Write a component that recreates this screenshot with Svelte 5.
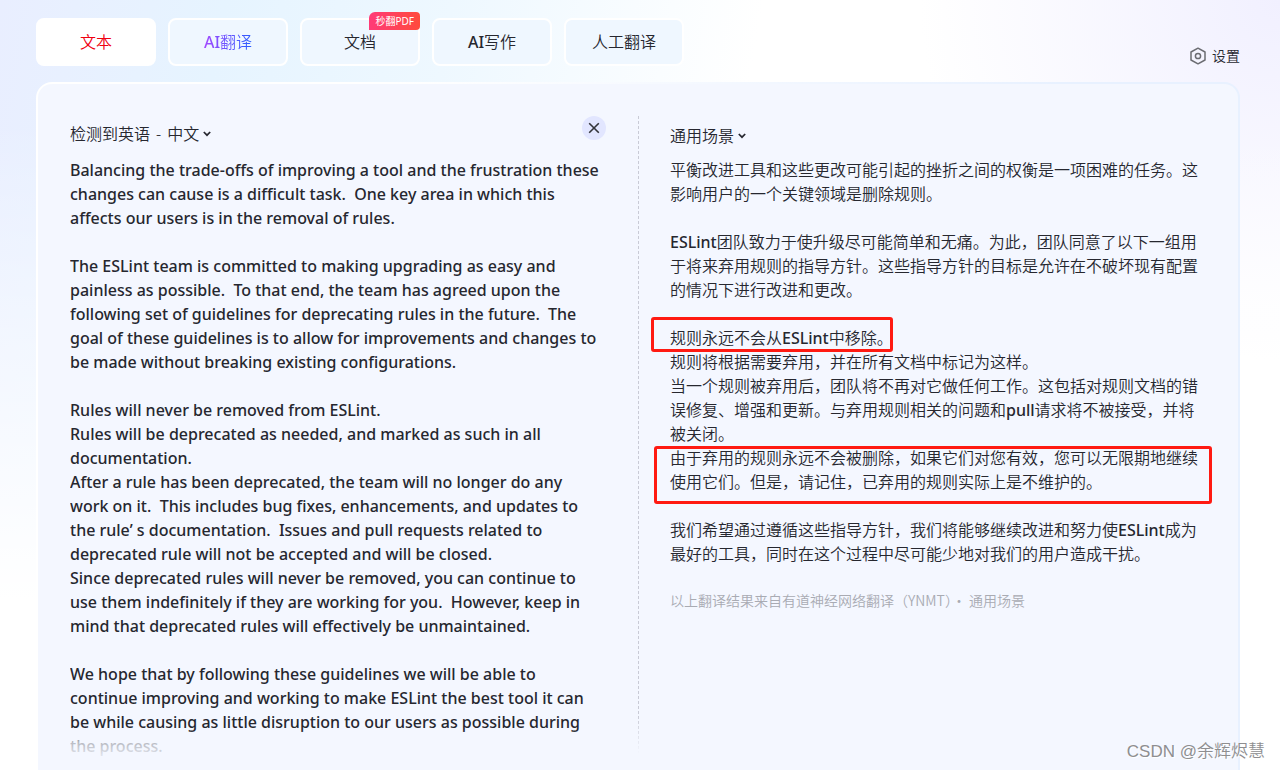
<script lang="ts">
  const tabs = [
    { label: '文本', kind: 'active' },
    { label: 'AI翻译', kind: 'ai' },
    { label: '文档', kind: '', badge: '秒翻PDF' },
    { label: 'AI写作', kind: '' },
    { label: '人工翻译', kind: '' }
  ];

  let source = $state(`Balancing the trade-offs of improving a tool and the frustration these
changes can cause is a difficult task.  One key area in which this
affects our users is in the removal of rules.

The ESLint team is committed to making upgrading as easy and
painless as possible.  To that end, the team has agreed upon the
following set of guidelines for deprecating rules in the future.  The
goal of these guidelines is to allow for improvements and changes to
be made without breaking existing configurations.

Rules will never be removed from ESLint.
Rules will be deprecated as needed, and marked as such in all
documentation.
After a rule has been deprecated, the team will no longer do any
work on it.  This includes bug fixes, enhancements, and updates to
the rule’ s documentation.  Issues and pull requests related to
deprecated rule will not be accepted and will be closed.
Since deprecated rules will never be removed, you can continue to
use them indefinitely if they are working for you.  However, keep in
mind that deprecated rules will effectively be unmaintained.

We hope that by following these guidelines we will be able to
continue improving and working to make ESLint the best tool it can
be while causing as little disruption to our users as possible during
the process.`);

  // mark: which highlight frame goes round the block
  const result = [
    { text: '平衡改进工具和这些更改可能引起的挫折之间的权衡是一项困难的任务。这\n影响用户的一个关键领域是删除规则。' },
    { text: '' },
    { text: 'ESLint团队致力于使升级尽可能简单和无痛。为此，团队同意了以下一组用\n于将来弃用规则的指导方针。这些指导方针的目标是允许在不破坏现有配置\n的情况下进行改进和更改。' },
    { text: '' },
    { text: '规则永远不会从ESLint中移除。', mark: 'short' },
    { text: '规则将根据需要弃用，并在所有文档中标记为这样。' },
    { text: '当一个规则被弃用后，团队将不再对它做任何工作。这包括对规则文档的错\n误修复、增强和更新。与弃用规则相关的问题和pull请求将不被接受，并将\n被关闭。' },
    { text: '由于弃用的规则永远不会被删除，如果它们对您有效，您可以无限期地继续\n使用它们。但是，请记住，已弃用的规则实际上是不维护的。', mark: 'long' },
    { text: '' },
    { text: '我们希望通过遵循这些指导方针，我们将能够继续改进和努力使ESLint成为\n最好的工具，同时在这个过程中尽可能少地对我们的用户造成干扰。' }
  ];

  // odd pieces are the Latin words
  function pieces(text: string) {
    return text.split(/([A-Za-z]+)/);
  }
</script>

{#snippet chevron()}
  <svg width="8" height="6" viewBox="0 0 8 6" fill="none" stroke="currentColor" stroke-width="1.7">
    <path d="M0.8 1L4 4.2L7.2 1" />
  </svg>
{/snippet}

{#snippet mixed(text: string)}
  {#each pieces(text) as piece, i}{#if i % 2}<span class="latin">{piece}</span>{:else}{piece}{/if}{/each}
{/snippet}

<div class="page">
  <header>
    <nav class="tabs">
      {#each tabs as tab}
        <button class="tab {tab.kind}">
          <span class="label">{@render mixed(tab.label)}</span>
          {#if tab.badge}<span class="badge">{tab.badge}</span>{/if}
        </button>
      {/each}
    </nav>
    <button class="settings">
      <svg width="18" height="18" viewBox="0 0 18 18" fill="none" stroke="#6b6c72" stroke-width="1.5">
        <path d="M9 1.2L16 5V13L9 16.8L2 13V5Z" stroke-linejoin="round" />
        <circle cx="9" cy="9" r="2.6" />
      </svg>
      设置
    </button>
  </header>

  <main class="panel">
    <section class="side source">
      <div class="bar">
        <button class="picker">
          <span class="pair"><span>检测到英语</span><span>-</span><span>中文</span></span>
          {@render chevron()}
        </button>
        <button class="clear" aria-label="清空" onclick={() => (source = '')}>
          <svg width="12" height="12" viewBox="0 0 12 12" fill="none" stroke="#33343a" stroke-width="1.6">
            <path d="M1.2 1.2L10.8 10.8M10.8 1.2L1.2 10.8" />
          </svg>
        </button>
      </div>
      <textarea aria-label="原文" spellcheck="false" bind:value={source}></textarea>
    </section>

    <section class="side target">
      <div class="bar">
        <button class="picker">通用场景 {@render chevron()}</button>
      </div>
      <div class="result">
        {#each result as block}
          <p class={block.mark ? `mark ${block.mark}` : ''}>{@render mixed(block.text)}</p>
        {/each}
      </div>
      <p class="note">以上翻译结果来自有道神经网络翻译（YNMT）· 通用场景</p>
    </section>
  </main>

  <div class="watermark">CSDN @余辉烬慧</div>
</div>

<style>
  :global(body) {
    margin: 0;
  }

  .page {
    position: relative;
    display: flex;
    flex-direction: column;
    box-sizing: border-box;
    height: 100vh;
    padding: 18px 40px 0 36px;
    overflow: hidden;
    color: #26272f;
    font: 16px/24px 'Noto Sans', 'Noto Sans CJK SC', sans-serif;
    background:
      linear-gradient(180deg, rgba(255, 255, 255, 0) 120px, #fff 600px),
      radial-gradient(circle at 100% 0, #f1f0ff 0, rgba(255, 255, 255, 0) 360px),
      linear-gradient(100deg, #e9eeff 0, #e6f4ff 16%, #eef8ff 32%, #fff 54%);
  }

  button,
  textarea {
    margin: 0;
    padding: 0;
    border: 0;
    background: none;
    color: inherit;
    font: inherit;
  }

  button {
    cursor: pointer;
  }

  header {
    display: flex;
    justify-content: space-between;
    height: 48px;
    margin-bottom: 16px;
  }

  .tabs {
    display: flex;
    gap: 12px;
  }

  .tab {
    position: relative;
    box-sizing: border-box;
    width: 120px;
    height: 48px;
    border: 2px solid #fff;
    border-radius: 8px;
    background: #eff7ff;
    font-weight: 350;
  }

  .tab.active {
    background: #fff;
    color: #f0000f;
  }

  .tab.ai .label {
    background: linear-gradient(90deg, #a44bff, #2a5cff);
    background-clip: text;
    color: transparent;
  }

  .latin {
    font-weight: 500;
  }

  .badge {
    position: absolute;
    top: -8px;
    right: -2px;
    padding: 0 6px;
    border-radius: 6px 4px 4px 0;
    background: linear-gradient(90deg, #ff3b78, #ff4a3c);
    color: #fff;
    font-size: 10px;
    font-weight: 400;
    line-height: 18px;
  }

  .settings {
    display: flex;
    align-items: center;
    align-self: flex-end;
    gap: 5px;
    height: 20px;
    font-size: 14px;
    font-weight: 350;
  }

  .panel {
    flex: 1;
    display: grid;
    grid-template-columns: 1fr 1fr;
    min-height: 0;
    border: 2px solid transparent;
    border-bottom: 0;
    border-radius: 16px 16px 0 0;
    background:
      linear-gradient(#f4f7ff, #f4f7ff) padding-box,
      linear-gradient(90deg, #fff 30%, #e8f1ff 85%) border-box;
  }

  .side {
    position: relative;
    display: flex;
    flex-direction: column;
    min-width: 0;
    padding: 32px 32px 12px;
  }

  .bar {
    display: flex;
    justify-content: space-between;
    height: 42px;
  }

  .picker {
    display: flex;
    align-items: center;
    gap: 4px;
    height: 36px;
    font-weight: 350;
  }

  .pair {
    display: flex;
    gap: 6px;
  }

  .target .picker {
    height: 40px;
  }

  .clear {
    display: flex;
    align-items: center;
    justify-content: center;
    width: 24px;
    height: 24px;
    border-radius: 50%;
    background: #e2e6ff;
  }

  textarea {
    flex: 1;
    overflow: hidden;
    resize: none;
    outline: none;
    font-weight: 500;
    white-space: pre;
  }

  /* fades the last line out at the lower edge */
  .source::after {
    content: '';
    position: absolute;
    right: 0;
    bottom: 0;
    left: 0;
    height: 40px;
    background: linear-gradient(rgba(244, 247, 255, 0), rgba(244, 247, 255, 0.7) 30%, #f4f7ff 80%);
    pointer-events: none;
  }

  .target::before {
    content: '';
    position: absolute;
    top: 32px;
    bottom: 16px;
    left: 0;
    width: 1px;
    background:
      linear-gradient(rgba(244, 247, 255, 0) 94%, #f4f7ff),
      repeating-linear-gradient(#c9cbd6 0 3px, transparent 3px 5px);
  }

  p {
    position: relative;
    min-height: 24px;
    margin: 0;
    white-space: pre;
  }

  .result {
    font-weight: 350;
  }

  .mark::after {
    content: '';
    position: absolute;
    border: 3px solid #ff1a12;
    border-radius: 3px;
  }

  .mark.short::after {
    inset: -9px auto -2px -19px;
    width: 236px;
  }

  .mark.long::after {
    inset: 0 -6px -10px -16px;
  }

  .note {
    margin-top: 22px;
    color: #a9abb3;
    font-family: 'Noto Sans CJK SC', sans-serif;
    font-size: 14px;
    font-weight: 350;
  }

  .watermark {
    position: absolute;
    right: 15px;
    bottom: 6px;
    color: #8e8e90;
    font: 350 17px/24px 'Liberation Sans', 'Noto Sans CJK SC', sans-serif;
    text-shadow: 1px 1px 0 #fff;
  }
</style>
